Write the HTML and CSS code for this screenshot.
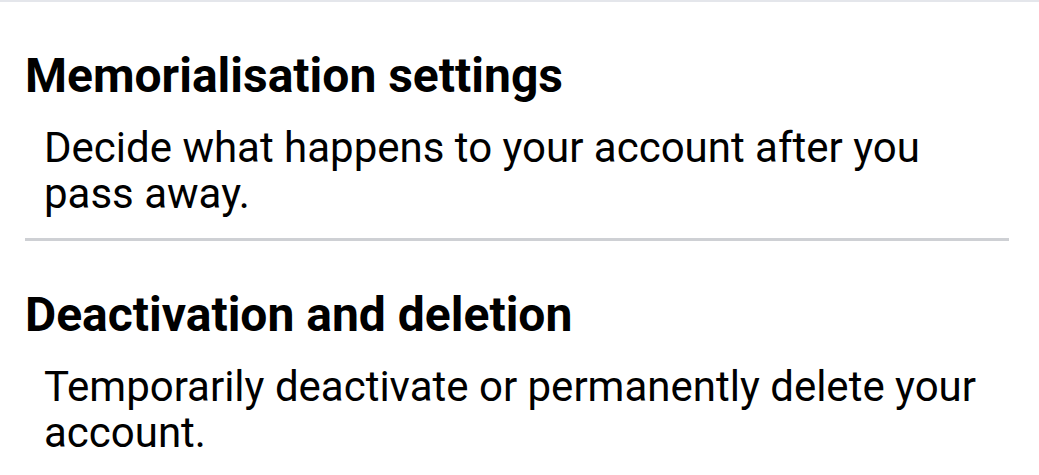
FILE: index.html
```html
<!DOCTYPE html>
<html lang="en">
<head>
<meta charset="utf-8">
<title>Settings</title>
<link rel="stylesheet" href="styles.css">
</head>
<body>
<div class="top-rule"></div>
<div class="list">
  <div class="item">
    <h2 class="item-title">Memorialisation settings</h2>
    <p class="item-desc">Decide what happens to your account after you pass away.</p>
  </div>
  <div class="divider"></div>
  <div class="item">
    <h2 class="item-title">Deactivation and deletion</h2>
    <p class="item-desc">Temporarily deactivate or permanently delete your account.</p>
  </div>
</div>
</body>
</html>
```
FILE: styles.css
```css
html, body {
  margin: 0;
  padding: 0;
  background: #ffffff;
}
body {
  font-family: Roboto, "Noto Sans", sans-serif;
  color: #000000;
  width: 1039px;
  height: 475px;
  overflow: hidden;
}
.top-rule {
  height: 2px;
  background: #e4e6eb;
}
.list {
  padding: 0 30px 0 25px;
}
.item {
  padding-top: 48px;
}
.item-title {
  margin: 0;
  font-size: 48px;
  font-weight: 700;
  line-height: 52px;
}
.item-desc {
  margin: 0;
  padding: 23px 15px 0 19px;
  font-size: 42px;
  font-weight: 400;
  line-height: 46px;
}
.divider {
  margin-top: 21px;
  height: 3px;
  background: #ced0d4;
}
```
